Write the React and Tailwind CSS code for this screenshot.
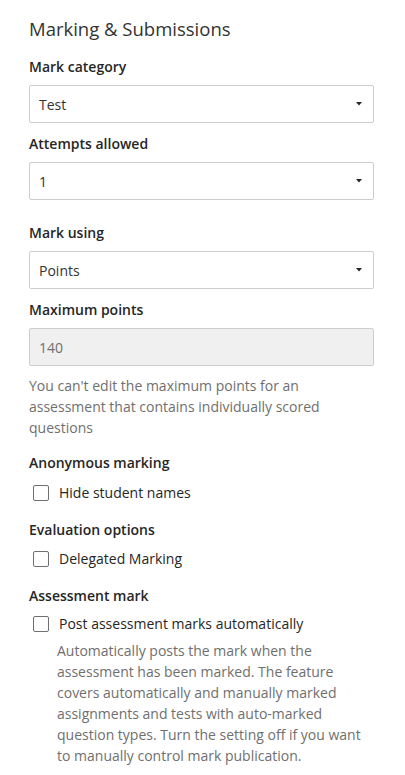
import React from 'react';

const Caret = () => (
  <svg width="6" height="4" viewBox="0 0 6 4" className="shrink-0">
    <path d="M0 0 L6 0 L3 3.5 Z" fill="#262626" />
  </svg>
);

const Label = ({ children, className = '' }) => (
  <div className={`text-[14px] leading-[21px] font-semibold text-[#262626] ${className}`}>{children}</div>
);

const SelectBox = ({ value, className = '' }) => (
  <div
    className={`h-[38px] w-[345px] border border-[#cdcdcd] rounded-[2px] bg-white flex items-center justify-between pl-[9px] pr-[11px] ${className}`}
  >
    <span className="text-[14px] text-[#333333]">{value}</span>
    <Caret />
  </div>
);

const Checkbox = ({ label, className = '' }) => (
  <div className={`flex items-center pl-[4px] ${className}`}>
    <span className="w-[16px] h-[16px] border border-[#6f6f6f] rounded-[2px] bg-white shrink-0" />
    <span className="ml-[10px] text-[14px] leading-[21px] text-[#262626]">{label}</span>
  </div>
);

export default function App() {
  return (
    <div
      className="min-h-screen bg-white pl-[29px] pt-[16px]"
      style={{ fontFamily: '"Open Sans", "Noto Sans", sans-serif' }}
    >
      <h2 className="text-[18.5px] leading-[26px] text-[#333333] font-normal">Marking &amp; Submissions</h2>

      <Label className="mt-[14px]">Mark category</Label>
      <SelectBox value="Test" className="mt-[8px]" />

      <Label className="mt-[10px]">Attempts allowed</Label>
      <SelectBox value="1" className="mt-[8px]" />

      <Label className="mt-[22px]">Mark using</Label>
      <SelectBox value="Points" className="mt-[8px]" />

      <Label className="mt-[10px]">Maximum points</Label>
      <div className="mt-[8px] h-[38px] w-[345px] border border-[#cdcdcd] rounded-[2px] bg-[#f0f0f0] flex items-center pl-[9px]">
        <span className="text-[14px] text-[#6f6f6f]">140</span>
      </div>
      <p className="mt-[9px] w-[345px] text-[14px] leading-[21px] text-[#6f6f6f]">
        You can't edit the maximum points for an assessment that contains individually scored questions
      </p>

      <Label className="mt-[14px]">Anonymous marking</Label>
      <Checkbox label="Hide student names" className="mt-[9px]" />

      <Label className="mt-[16px]">Evaluation options</Label>
      <Checkbox label="Delegated Marking" className="mt-[8px]" />

      <Label className="mt-[16px]">Assessment mark</Label>
      <Checkbox label="Post assessment marks automatically" className="mt-[7px]" />
      <p className="mt-[6px] ml-[28px] w-[310px] text-[14px] leading-[21px] text-[#6f6f6f]">
        Automatically posts the mark when the assessment has been marked. The feature covers automatically and
        manually marked assignments and tests with auto-marked question types. Turn the setting off if you want to
        manually control mark publication.
      </p>
    </div>
  );
}
